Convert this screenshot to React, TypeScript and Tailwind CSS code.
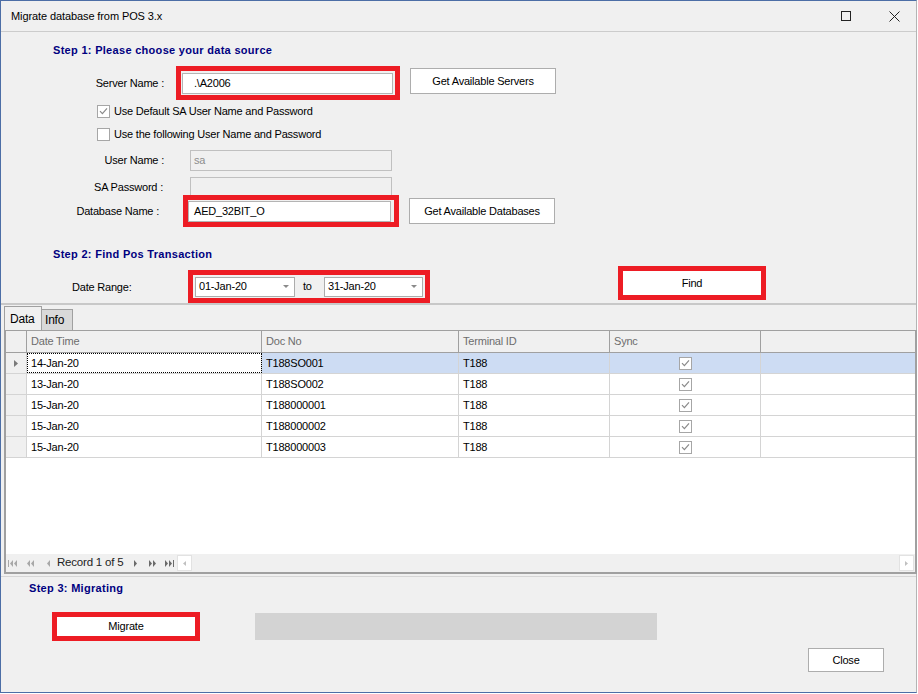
import React from "react";

const rows = [
  { date: "14-Jan-20", doc: "T188SO001", term: "T188" },
  { date: "13-Jan-20", doc: "T188SO002", term: "T188" },
  { date: "15-Jan-20", doc: "T188000001", term: "T188" },
  { date: "15-Jan-20", doc: "T188000002", term: "T188" },
  { date: "15-Jan-20", doc: "T188000003", term: "T188" },
];

function CheckMark({ color = "#8a8a8a" }: { color?: string }) {
  return (
    <svg width="9" height="8" viewBox="0 0 9 8">
      <path d="M1 4.2 L3.4 6.6 L8 1.4" fill="none" stroke={color} strokeWidth="1.2" />
    </svg>
  );
}

function Checkbox({ checked }: { checked?: boolean }) {
  return (
    <div className="w-[13px] h-[13px] border border-[#a6a6a6] bg-white flex items-center justify-center shrink-0">
      {checked && <CheckMark />}
    </div>
  );
}

function Combo({ value, className }: { value: string; className: string }) {
  return (
    <div className={`h-[20px] border border-[#acacac] bg-white flex items-center pl-[3px] pr-[5px] ${className}`}>
      <span className="flex-1">{value}</span>
      <svg width="6" height="3" viewBox="0 0 6 3">
        <path d="M0 0H6L3 3z" fill="#8a8a8a" />
      </svg>
    </div>
  );
}

function NavIcon({ kind, color }: { kind: string; color: string }) {
  return (
    <svg width="9" height="7" viewBox="0 0 9 7" fill={color}>
      {kind === "first" && <path d="M0 0h1v7H0z M5 0v7L2 3.5z M9 0v7L6 3.5z" />}
      {kind === "prevPage" && <path d="M4 0v7L1 3.5z M8 0v7L5 3.5z" />}
      {kind === "prev" && <path d="M6 0v7L3 3.5z" />}
      {kind === "next" && <path d="M3 0v7L6 3.5z" />}
      {kind === "nextPage" && <path d="M1 0v7L4 3.5z M5 0v7L8 3.5z" />}
      {kind === "last" && <path d="M0 0v7L3 3.5z M4 0v7L7 3.5z M8 0h1v7H8z" />}
    </svg>
  );
}

const colDate = "w-[235px] border-r";
const colDoc = "w-[197px] border-r";
const colTerm = "w-[151px] border-r";
const colSync = "w-[151px] border-r";

export default function App() {
  return (
    <div className="w-[918px] h-[694px] bg-white font-['Liberation_Sans',Arial,sans-serif] text-[11px] tracking-[-0.2px] text-black leading-none">
      <div className="w-[917px] h-[693px] flex flex-col bg-[#f0f0f0] border-t border-l border-b border-[#4c6ea6] border-r border-r-[#b4b4b4]">
        {/* title bar */}
        <div className="h-[31px] shrink-0 border-b border-[#cccccc] flex items-center pl-[10px] text-[11px] tracking-[-0.1px]">
          <span>Migrate database from POS 3.x</span>
          <div className="ml-auto mr-[16px] flex items-center gap-[38px]">
            <div className="w-[10px] h-[10px] border border-[#222]" />
            <svg width="11" height="11" viewBox="0 0 11 11">
              <path d="M0.5 0.5L10.5 10.5M10.5 0.5L0.5 10.5" stroke="#222" strokeWidth="1" />
            </svg>
          </div>
        </div>

        {/* step 1 */}
        <div className="ml-[52px] mt-[11px] h-[14px] leading-[14px] font-bold tracking-[0.3px] text-[#000080]">
          Step 1: Please choose your data source
        </div>

        <div className="mt-[9px] h-[34px] flex items-center">
          <div className="w-[163px] text-right">Server Name :</div>
          <div className="ml-[12px] w-[224px] h-[34px] border-[5px] border-[#ed1c24] flex items-center px-[1px]">
            <div className="w-[211px] h-[21px] border border-[#b4b4b4] bg-white flex items-center pl-[11px]">.\A2006</div>
          </div>
          <button className="ml-[10px] self-start mt-[2px] w-[146px] h-[26px] border border-[#adadad] bg-white">
            Get Available Servers
          </button>
        </div>

        <div className="h-[22px] flex items-center pl-[96px]">
          <Checkbox checked />
          <span className="ml-[4px]">Use Default SA User Name and Password</span>
        </div>
        <div className="h-[24px] flex items-center pl-[96px]">
          <Checkbox />
          <span className="ml-[4px]">Use the following User Name and Password</span>
        </div>

        <div className="mt-[4px] h-[21px] flex items-center">
          <div className="w-[163px] text-right">User Name :</div>
          <div className="ml-[26px] w-[202px] h-[21px] border border-[#c0c0c0] bg-[#f0f0f0] flex items-center pl-[3px] text-[#8d8d8d]">sa</div>
        </div>
        <div className="mt-[6px] h-[21px] flex items-center">
          <div className="w-[162px] text-right">SA Password :</div>
          <div className="ml-[27px] w-[202px] h-[21px] border border-[#c0c0c0] bg-[#f0f0f0]" />
        </div>

        <div className="-mt-[3px] h-[32px] flex items-center">
          <div className="w-[158px] text-right">Database Name :</div>
          <div className="ml-[24px] w-[216px] h-[32px] border-[5px] border-[#ed1c24] flex items-center pr-[3px]">
            <div className="w-[203px] h-[21px] border border-[#b4b4b4] bg-white flex items-center pl-[5px]">AED_32BIT_O</div>
          </div>
          <button className="ml-[10px] self-start mt-[3px] w-[146px] h-[26px] border border-[#adadad] bg-white">
            Get Available Databases
          </button>
        </div>

        {/* step 2 */}
        <div className="ml-[52px] mt-[20px] h-[14px] leading-[14px] font-bold tracking-[0.3px] text-[#000080]">Step 2: Find Pos Transaction</div>

        <div className="mt-[5px] h-[37px] flex items-start">
          <div className="ml-[71px] w-[116px] mt-[11px] h-[20px] flex items-center">Date Range:</div>
          <div className="mt-[4px] h-[33px] border-[5px] border-[#ed1c24] p-[2px] flex items-center">
            <Combo value="01-Jan-20" className="w-[100px]" />
            <div className="w-[29px] pl-[8px]">to</div>
            <Combo value="31-Jan-20" className="w-[99px]" />
          </div>
          <div className="ml-[188px] w-[148px] h-[34px] border-[5px] border-[#ed1c24] bg-white flex items-center justify-center">
            Find
          </div>
        </div>

        <div className="h-[2px] bg-[#c8c8c8]" />

        {/* tabs */}
        <div className="mt-[1px] ml-[3px] h-[24px] flex items-end">
          <div className="w-[38px] h-[24px] border border-b-0 border-[#a0a0a0] bg-[#f0f0f0] flex items-center pl-[5px] text-[12px]">
            Data
          </div>
          <div className="w-[31px] h-[21px] border-t border-r border-[#a0a0a0] bg-[#d9d9d9] flex items-center pl-[3px] text-[12px]">
            Info
          </div>
        </div>

        {/* grid */}
        <div className="ml-[3px] w-[913px] h-[244px] border-t border-x-2 border-b-2 border-[#a0a0a0] flex flex-col">
          <div className="h-[22px] flex bg-[#f0f0f0] border-b border-[#a0a0a0] text-[#6d6d6d] [&>div]:border-[#a0a0a0]">
            <div className="w-[21px] border-r" />
            <div className={`${colDate} pl-[4px] flex items-center`}>Date Time</div>
            <div className={`${colDoc} pl-[4px] flex items-center`}>Doc No</div>
            <div className={`${colTerm} pl-[4px] flex items-center`}>Terminal ID</div>
            <div className={`${colSync} pl-[4px] flex items-center`}>Sync</div>
            <div className="flex-1" />
          </div>
          {rows.map((r, i) => {
            const sel = i === 0;
            return (
              <div key={i} className={`h-[21px] flex border-b border-[#d4d4d4] [&>div]:border-[#d4d4d4] ${sel ? "bg-[#cddcf3]" : "bg-white"}`}>
                <div className="w-[21px] border-r bg-[#f0f0f0] flex items-center justify-center">
                  {sel && (
                    <svg width="4" height="7" viewBox="0 0 4 7">
                      <path d="M0 0L4 3.5L0 7z" fill="#7a7a7a" />
                    </svg>
                  )}
                </div>
                <div className={`${colDate} pl-[4px] flex items-center bg-white ${sel ? "outline-1 outline-dotted outline-black -outline-offset-1" : ""}`}>
                  {r.date}
                </div>
                <div className={`${colDoc} pl-[4px] flex items-center`}>{r.doc}</div>
                <div className={`${colTerm} pl-[4px] flex items-center`}>{r.term}</div>
                <div className={`${colSync} flex items-center justify-center`}>
                  <Checkbox checked />
                </div>
                <div className="flex-1" />
              </div>
            );
          })}
          <div className="flex-1 bg-white" />
          <div className="h-[18px] flex items-center bg-[#f0f0f0]">
            <div className="ml-[2px] flex items-center gap-[9px]">
              <NavIcon kind="first" color="#a8a8a8" />
              <NavIcon kind="prevPage" color="#a8a8a8" />
              <NavIcon kind="prev" color="#a8a8a8" />
            </div>
            <span className="ml-[4px] text-[11.5px] text-[#222]">Record 1 of 5</span>
            <div className="ml-[8px] flex items-center gap-[8px]">
              <NavIcon kind="next" color="#6a6a6a" />
              <NavIcon kind="nextPage" color="#6a6a6a" />
              <NavIcon kind="last" color="#6a6a6a" />
            </div>
            <div className="ml-[3px] flex-1 h-[16px] flex items-center">
              <div className="w-[15px] h-[16px] border border-[#e2e2e2] bg-white flex items-center justify-center">
                <svg width="3" height="5" viewBox="0 0 3 5">
                  <path d="M3 0V5L0 2.5z" fill="#c0c0c0" />
                </svg>
              </div>
              <div className="flex-1" />
              <div className="mr-[1px] w-[15px] h-[16px] border border-[#e2e2e2] bg-white flex items-center justify-center">
                <svg width="3" height="5" viewBox="0 0 3 5">
                  <path d="M0 0V5L3 2.5z" fill="#c0c0c0" />
                </svg>
              </div>
            </div>
          </div>
        </div>

        <div className="mt-[2px] h-[1px] bg-[#d6d6d6]" />

        {/* step 3 */}
        <div className="ml-[28px] mt-[4px] h-[14px] leading-[14px] font-bold tracking-[0.3px] text-[#000080]">Step 3: Migrating</div>

        <div className="mt-[17px] flex items-start">
          <div className="ml-[51px] w-[148px] h-[29px] border-[5px] border-[#ed1c24] bg-white flex items-center justify-center">
            Migrate
          </div>
          <div className="ml-[55px] mt-[1px] w-[402px] h-[27px] bg-[#d3d3d3]" />
        </div>

        <div className="mt-[7px] flex">
          <button className="ml-[807px] w-[76px] h-[24px] border border-[#adadad] bg-white">Close</button>
        </div>
      </div>
    </div>
  );
}
